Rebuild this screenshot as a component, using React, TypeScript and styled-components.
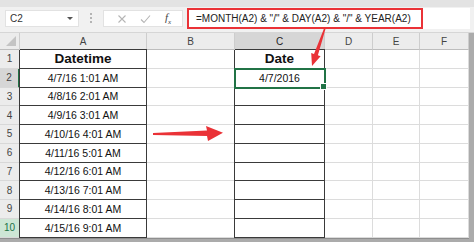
import styled, { createGlobalStyle } from 'styled-components';

const GlobalStyle = createGlobalStyle`
	html, body {
		margin: 0;
		padding: 0;
		background: #ababab;
	}
	* {
		box-sizing: border-box;
	}
`;

const COL_WIDTHS = [20, 127, 88, 90, 48, 47, 49];
const COLUMNS = ['A', 'B', 'C', 'D', 'E', 'F'];
const RED = '#ea3237';
const GREEN = '#217346';

const rows: { a: string; c: string }[] = [
	{ a: 'Datetime', c: 'Date' },
	{ a: '4/7/16 1:01 AM', c: '4/7/2016' },
	{ a: '4/8/16 2:01 AM', c: '' },
	{ a: '4/9/16 3:01 AM', c: '' },
	{ a: '4/10/16 4:01 AM', c: '' },
	{ a: '4/11/16 5:01 AM', c: '' },
	{ a: '4/12/16 6:01 AM', c: '' },
	{ a: '4/13/16 7:01 AM', c: '' },
	{ a: '4/14/16 8:01 AM', c: '' },
	{ a: '4/15/16 9:01 AM', c: '' },
];

const Page = styled.div`
	position: relative;
	width: 474px;
	height: 242px;
	overflow: hidden;
	display: flex;
	flex-direction: column;
	background: #ababab;
	font-family: 'Liberation Sans', Arial, sans-serif;
	color: #1a1a1a;
`;

const TopStrip = styled.div`
	height: 7px;
	background: #e3e3e3;
`;

const FormulaBar = styled.div`
	height: 26px;
	display: flex;
	align-items: flex-start;
	padding: 1px 4px 0 5px;
	background: #f1f1f1;
	border-bottom: 1px solid #d6d6d6;
`;

const NameBox = styled.div`
	width: 74px;
	height: 17px;
	margin-top: 2px;
	display: flex;
	align-items: center;
	justify-content: space-between;
	padding: 0 5px 0 4px;
	background: #fff;
	border: 1px solid #e2e2e2;
	font-size: 10px;
	color: #333;
`;

const DropCaret = styled.span`
	width: 0;
	height: 0;
	border-left: 3px solid transparent;
	border-right: 3px solid transparent;
	border-top: 3px solid #555;
`;

const Grip = styled.div`
	width: 24px;
	height: 19px;
	display: flex;
	flex-direction: column;
	align-items: center;
	justify-content: center;
	gap: 2px;
	span {
		width: 2px;
		height: 2px;
		background: #b4b4b4;
	}
`;

const ButtonBox = styled.div`
	width: 80px;
	height: 17px;
	margin-top: 2px;
	display: flex;
	align-items: center;
	justify-content: space-around;
	padding: 0 4px 0 6px;
	background: #fff;
	border: 1px solid #e2e2e2;
`;

const Fx = styled.span`
	font-family: 'Liberation Serif', 'Times New Roman', serif;
	font-style: italic;
	font-size: 11px;
	color: #444;
	sub {
		font-size: 7px;
	}
`;

const FormulaField = styled.div`
	flex: 1;
	height: 21px;
	margin-left: 4px;
	background: #fff;
`;

const Highlight = styled.div`
	width: 236px;
	height: 21px;
	display: flex;
	align-items: center;
	padding-left: 7px;
	border: 2px solid ${RED};
	font-size: 10px;
	color: #222;
	white-space: nowrap;
`;

const Sheet = styled.div`
	display: grid;
	grid-template-columns: ${COL_WIDTHS.map((w) => `${w}px`).join(' ')};
	grid-template-rows: 17px repeat(10, 18.75px);
	width: ${COL_WIDTHS.reduce((s, w) => s + w, 0)}px;
	background: #fff;
	border-bottom: 1px solid #8e8e8e;
	border-right: 1px solid #8e8e8e;
`;

const Corner = styled.div`
	position: relative;
	background: #ececec;
	border-right: 1px solid #cdcdcd;
	border-bottom: 1px solid #bdbdbd;
	&::after {
		content: '';
		position: absolute;
		right: 3px;
		bottom: 3px;
		border-left: 10px solid transparent;
		border-bottom: 10px solid #c4c4c4;
	}
`;

const ColHeader = styled.div<{ $active?: boolean }>`
	display: flex;
	align-items: center;
	justify-content: center;
	background: ${(p) => (p.$active ? '#d6d6d6' : '#ececec')};
	border-right: 1px solid #cdcdcd;
	border-bottom: 1px solid #bdbdbd;
	font-size: 10px;
	color: ${(p) => (p.$active ? '#222' : '#444')};
`;

const RowHeader = styled.div<{ $state?: 'active' | 'hover' }>`
	display: flex;
	align-items: center;
	justify-content: center;
	background: ${(p) =>
		p.$state === 'active' ? '#d6d6d6' : p.$state === 'hover' ? '#cde6d5' : '#ececec'};
	border-right: ${(p) => (p.$state === 'active' ? `2px solid ${GREEN}` : '1px solid #cdcdcd')};
	border-bottom: 1px solid #d8d8d8;
	font-size: 10px;
	color: ${(p) => (p.$state === 'hover' ? GREEN : '#444')};
`;

const Cell = styled.div<{ $boxed?: boolean; $first?: boolean; $title?: boolean }>`
	display: flex;
	align-items: center;
	justify-content: center;
	border-right: 1px solid ${(p) => (p.$boxed ? '#3a3a3a' : '#dcdcdc')};
	border-bottom: 1px solid ${(p) => (p.$boxed ? '#3a3a3a' : '#dcdcdc')};
	box-shadow: ${(p) =>
		p.$boxed ? (p.$first ? '-1px 0 0 #3a3a3a, 0 -1px 0 #3a3a3a' : '-1px 0 0 #3a3a3a') : 'none'};
	font-size: ${(p) => (p.$title ? '13.5px' : '10.5px')};
	font-weight: ${(p) => (p.$title ? 700 : 400)};
	color: #111;
	white-space: nowrap;
`;

const SelectedCell = styled(Cell)`
	position: relative;
	outline: 2px solid ${GREEN};
	outline-offset: -1px;
	&::after {
		content: '';
		position: absolute;
		right: -3px;
		bottom: -3px;
		width: 5px;
		height: 5px;
		background: ${GREEN};
		border: 1px solid #fff;
	}
`;

const Arrows = styled.svg`
	position: absolute;
	left: 0;
	top: 0;
	pointer-events: none;
`;

const CloseIcon = () => (
	<svg width="10" height="10" viewBox="0 0 10 10">
		<path d="M1.5 1.5 L8.5 8.5 M8.5 1.5 L1.5 8.5" stroke="#b5b5b5" strokeWidth="1.1" fill="none" />
	</svg>
);

const CheckIcon = () => (
	<svg width="11" height="10" viewBox="0 0 11 10">
		<path d="M1 5.5 L4 8.5 L10 1.5" stroke="#b5b5b5" strokeWidth="1.1" fill="none" />
	</svg>
);

export default function App() {
	return (
		<Page>
			<GlobalStyle />
			<TopStrip />
			<FormulaBar>
				<NameBox>
					C2
					<DropCaret />
				</NameBox>
				<Grip>
					<span />
					<span />
					<span />
				</Grip>
				<ButtonBox>
					<CloseIcon />
					<CheckIcon />
					<Fx>
						f<sub>x</sub>
					</Fx>
				</ButtonBox>
				<FormulaField>
					<Highlight>=MONTH(A2) &amp; "/" &amp; DAY(A2) &amp; "/" &amp; YEAR(A2)</Highlight>
				</FormulaField>
			</FormulaBar>
			<Sheet>
				<Corner />
				{COLUMNS.map((c) => (
					<ColHeader key={c} $active={c === 'C'}>
						{c}
					</ColHeader>
				))}
				{rows.map((row, i) => {
					const n = i + 1;
					const CCell = n === 2 ? SelectedCell : Cell;
					return [
						<RowHeader key={`h${n}`} $state={n === 2 ? 'active' : n === 10 ? 'hover' : undefined}>
							{n}
						</RowHeader>,
						<Cell key={`a${n}`} $boxed $first={n === 1} $title={n === 1}>
							{row.a}
						</Cell>,
						<Cell key={`b${n}`} />,
						<CCell key={`c${n}`} $boxed $first={n === 1} $title={n === 1}>
							{row.c}
						</CCell>,
						<Cell key={`d${n}`} />,
						<Cell key={`e${n}`} />,
						<Cell key={`f${n}`} />,
					];
				})}
			</Sheet>
			<Arrows width="474" height="242" viewBox="0 0 474 242">
				<polygon
					points="325.7,28.2 317.9,55.3 320.6,56.3 312,66 311.2,53.1 314,54.1 324.3,27.8"
					fill={RED}
				/>
				<polygon points="153,133 207,130.5 206,126 223,132.8 208,141 207,136 153,135" fill={RED} />
			</Arrows>
		</Page>
	);
}
